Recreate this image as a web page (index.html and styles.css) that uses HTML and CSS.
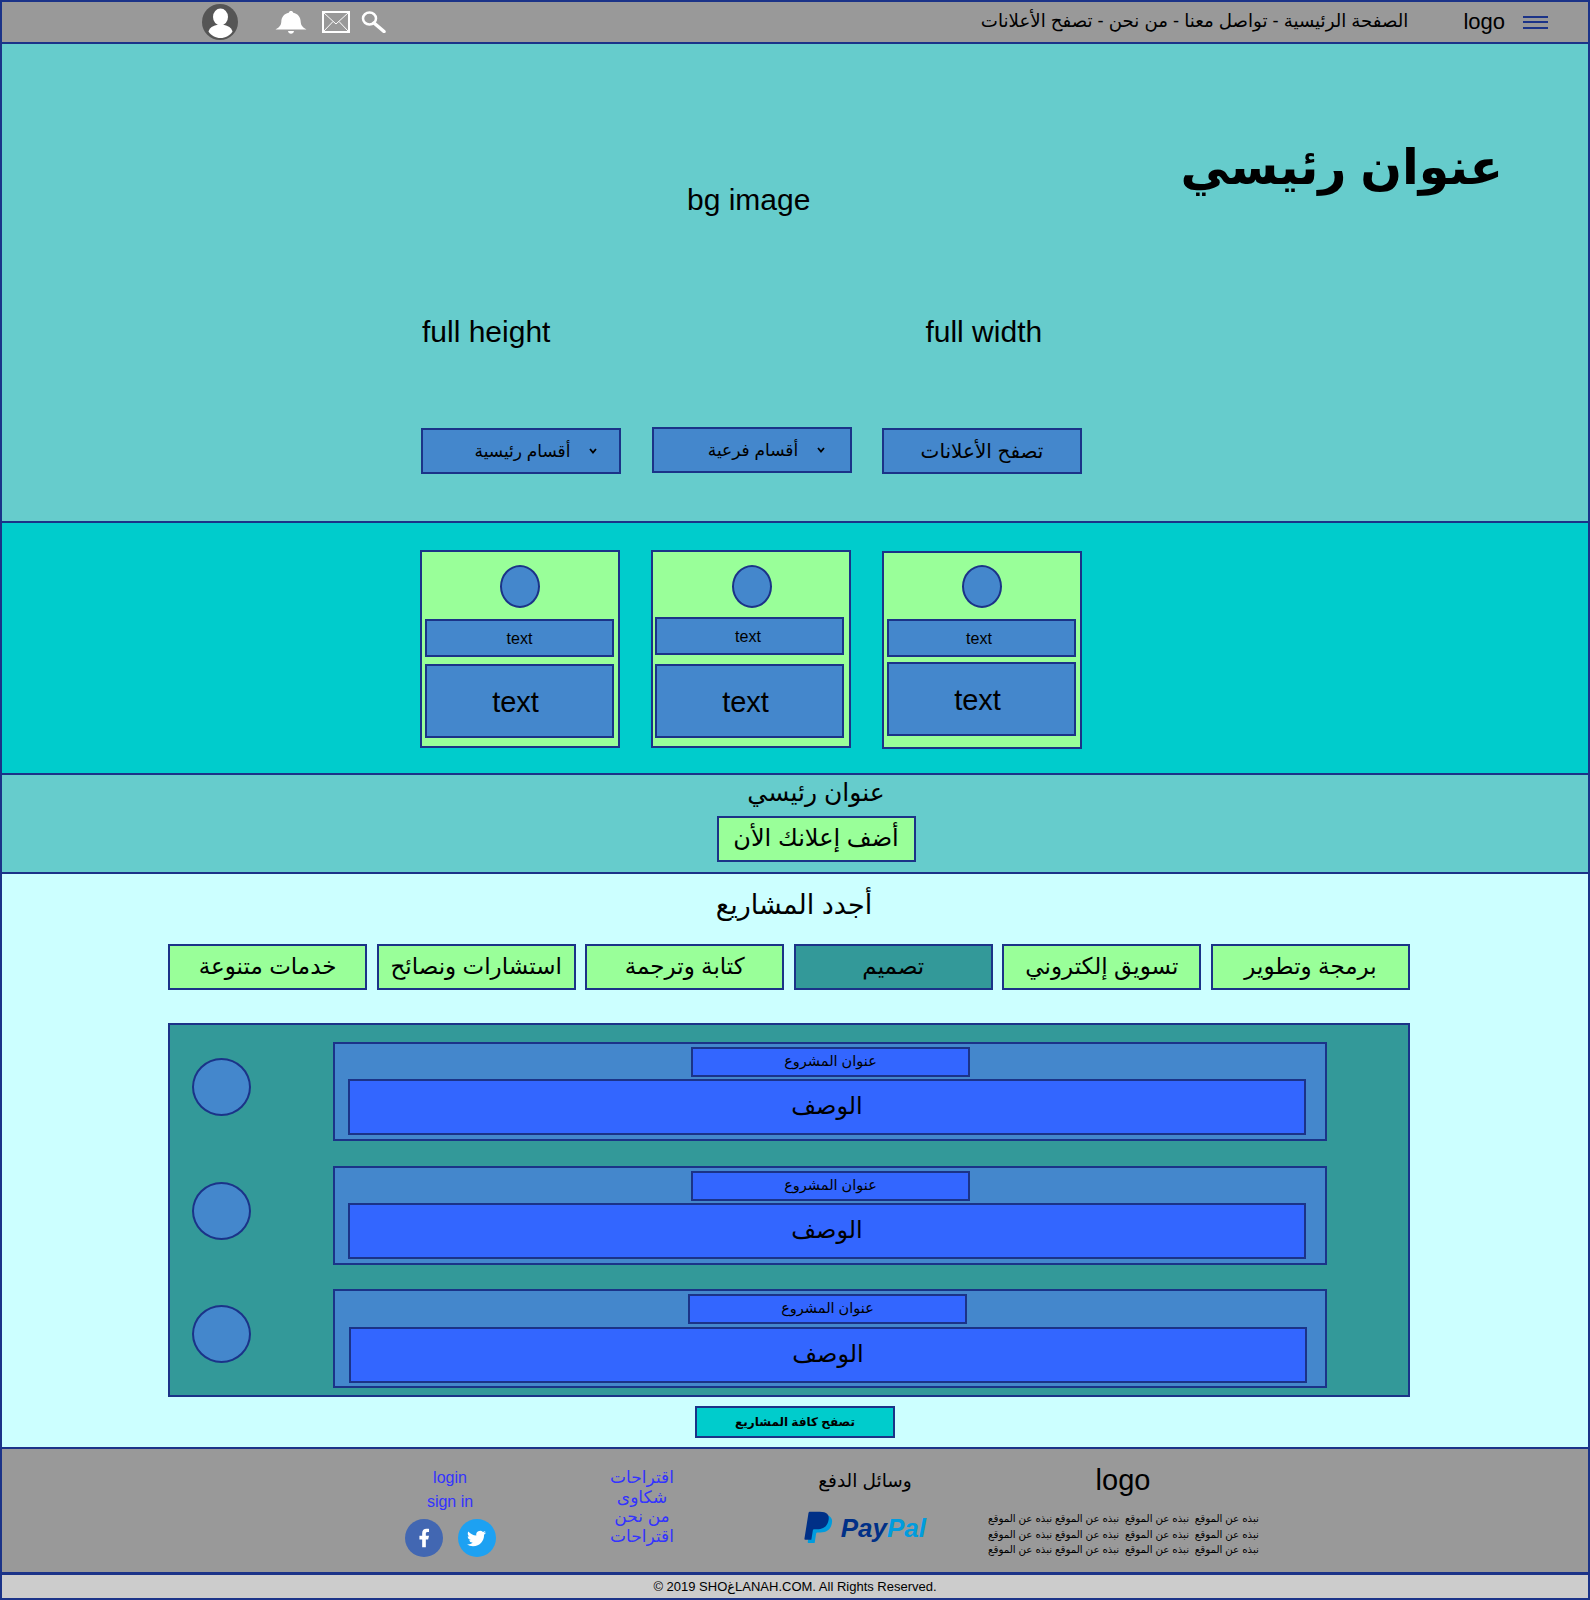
FILE: index.html
```html
<!DOCTYPE html>
<html lang="ar">
<head>
  <meta charset="UTF-8">
  <title>SHOغLANAH</title>
  <meta name="viewport" content="width=device-width, initial-scale=1">
  <link rel="stylesheet" href="styles.css">
</head>
<body>

<!-- Top bar -->
<header class="topbar">
  <div class="topbar-icons">
    <svg class="icon-avatar" viewBox="0 0 36 36"><circle cx="18" cy="18" r="18" fill="#555"/><ellipse cx="18.500" cy="13" rx="7.500" ry="8.500" fill="#fff"/><path d="M6.500 27.500c1.500-5 7-7 12-7s10.500 2 12 7c-2.500 4-7 6.500-12 6.500s-9.500-2.500-12-6.500z" fill="#fff"/></svg>
    <svg class="icon-bell" viewBox="0 0 32 23"><path d="M16 0c1.200 0 2 .7 2.200 1.700 5 1 7.300 4.500 7.500 9 .2 3 1.300 5.300 5.800 7.800H.5c4.500-2.500 5.600-4.800 5.800-7.800.2-4.500 2.500-8 7.500-9C14 .7 14.800 0 16 0z" fill="#fff"/><path d="M13 20h6c-.3 1.700-1.400 2.800-3 2.800s-2.700-1.100-3-2.800z" fill="#fff"/></svg>
    <svg class="icon-mail" viewBox="0 0 28 22" fill="none" stroke="#fff"><rect x="1" y="1" width="26" height="20" stroke-width="2"/><path d="M1.500 1.500L14 13 26.500 1.500M1.500 20.500L11 10.500M26.500 20.500L17 10.500" stroke-width="1"/></svg>
    <svg class="icon-search" viewBox="0 0 25 22" fill="none" stroke="#fff"><ellipse cx="8.500" cy="7.500" rx="6.500" ry="6" stroke-width="2.500"/><path d="M13 12l10 8.500" stroke-width="3.500" stroke-linecap="round"/></svg>
  </div>
  <div class="topbar-right">
    <nav class="topbar-links">الصفحة الرئيسية - تواصل معنا - من نحن - تصفح الأعلانات</nav>
    <div class="topbar-logo">logo</div>
    <div class="burger"><span></span><span></span><span></span></div>
  </div>
</header>

<!-- Hero -->
<section class="hero">
  <div class="hero-top">
    <div class="hero-note">bg image</div>
    <h1 class="hero-title">عنوان رئيسي</h1>
  </div>
  <div class="hero-labels">
    <div class="hero-note">full height</div>
    <div class="hero-note">full width</div>
  </div>
  <div class="hero-buttons">
    <div class="hero-btn hero-btn-menu">أقسام رئيسية <svg class="chev" viewBox="0 0 8 6"><path d="M1 1l3 3.500L7 1" fill="none" stroke="#000" stroke-width="1.800"/></svg></div>
    <div class="hero-btn hero-btn-menu hero-btn-up">أقسام فرعية <svg class="chev" viewBox="0 0 8 6"><path d="M1 1l3 3.500L7 1" fill="none" stroke="#000" stroke-width="1.800"/></svg></div>
    <div class="hero-btn">تصفح الأعلانات</div>
  </div>
</section>

<!-- Feature cards -->
<section class="features">
  <div class="card">
    <div class="dot"></div>
    <div class="card-small">text</div>
    <div class="card-big">text</div>
  </div>
  <div class="card card-b">
    <div class="dot"></div>
    <div class="card-small">text</div>
    <div class="card-big">text</div>
  </div>
  <div class="card card-c">
    <div class="dot"></div>
    <div class="card-small">text</div>
    <div class="card-big">text</div>
  </div>
</section>

<!-- Call to action -->
<section class="cta">
  <h2 class="cta-title">عنوان رئيسي</h2>
  <div class="cta-btn">أضف إعلانك الأن</div>
</section>

<!-- Projects -->
<section class="projects">
  <h2 class="projects-title">أجدد المشاريع</h2>
  <div class="tabs" dir="rtl">
    <div class="tab">برمجة وتطوير</div>
    <div class="tab">تسويق إلكتروني</div>
    <div class="tab tab-active">تصميم</div>
    <div class="tab">كتابة وترجمة</div>
    <div class="tab">استشارات ونصائح</div>
    <div class="tab">خدمات متنوعة</div>
  </div>
  <div class="panel">
    <div class="project">
      <div class="project-dot"></div>
      <div class="project-box">
        <div class="project-name">عنوان المشروع</div>
        <div class="project-desc">الوصف</div>
      </div>
    </div>
    <div class="project">
      <div class="project-dot"></div>
      <div class="project-box">
        <div class="project-name">عنوان المشروع</div>
        <div class="project-desc">الوصف</div>
      </div>
    </div>
    <div class="project project-last">
      <div class="project-dot"></div>
      <div class="project-box">
        <div class="project-name">عنوان المشروع</div>
        <div class="project-desc">الوصف</div>
      </div>
    </div>
  </div>
  <div class="see-all">تصفح كافة المشاريع</div>
</section>

<!-- Footer -->
<footer class="footer">
  <div class="foot-account">
    <a class="foot-login" href="#">login</a>
    <a class="foot-login" href="#">sign in</a>
    <div class="socials">
      <span class="social social-fb"><svg viewBox="0 0 24 24"><path d="M14 13.500h2.500l1-4H14v-2c0-1.030 0-2 2-2h1.500V2.140c-.326-.043-1.557-.14-2.857-.14C11.928 2 10 3.657 10 6.700v2.800H7v4h3V22h4v-8.500z" fill="#fff"/></svg></span>
      <span class="social social-tw"><svg viewBox="0 0 24 24"><path d="M23.953 4.570a10 10 0 01-2.825.775 4.958 4.958 0 002.163-2.723c-.951.555-2.005.959-3.127 1.184a4.920 4.920 0 00-8.384 4.482C7.690 8.095 4.067 6.130 1.640 3.162a4.822 4.822 0 00-.666 2.475c0 1.710.870 3.213 2.188 4.096a4.904 4.904 0 01-2.228-.616v.060a4.923 4.923 0 003.946 4.827 4.996 4.996 0 01-2.212.085 4.936 4.936 0 004.604 3.417 9.867 9.867 0 01-6.102 2.105c-.390 0-.779-.023-1.170-.067a13.995 13.995 0 007.557 2.209c9.053 0 13.998-7.496 13.998-13.985 0-.210 0-.420-.015-.630A9.935 9.935 0 0024 4.590z" fill="#fff"/></svg></span>
    </div>
  </div>
  <div class="foot-links">
    <a href="#">اقتراحات</a>
    <a href="#">شكاوى</a>
    <a href="#">من نحن</a>
    <a href="#">اقتراحات</a>
  </div>
  <div class="foot-pay">
    <div class="foot-pay-title">وسائل الدفع</div>
    <div class="paypal">
      <svg class="paypal-mark" viewBox="0 0 24 24"><path transform="translate(2.500 2.400)" d="M7.076 21.337H2.470a.641.641 0 0 1-.633-.740L4.944.901C5.026.382 5.474 0 5.998 0h7.460c2.570 0 4.578.543 5.690 1.810 1.010 1.150 1.304 2.420 1.012 4.287-.023.143-.047.288-.077.437-.983 5.050-4.349 6.797-8.647 6.797h-2.190c-.524 0-.968.382-1.050.900l-1.120 7.106z" fill="#009cde"/><path d="M7.076 21.337H2.470a.641.641 0 0 1-.633-.740L4.944.901C5.026.382 5.474 0 5.998 0h7.460c2.570 0 4.578.543 5.690 1.810 1.010 1.150 1.304 2.420 1.012 4.287-.023.143-.047.288-.077.437-.983 5.050-4.349 6.797-8.647 6.797h-2.190c-.524 0-.968.382-1.050.900l-1.120 7.106z" fill="#003087"/></svg>
      <span class="paypal-word"><span class="paypal-pay">Pay</span><span class="paypal-pal">Pal</span></span>
    </div>
  </div>
  <div class="foot-about">
    <div class="foot-logo">logo</div>
    <p class="foot-text">نبذه عن الموقع&nbsp; نبذه عن الموقع&nbsp; نبذه عن الموقع نبذه عن الموقع<br>نبذه عن الموقع&nbsp; نبذه عن الموقع&nbsp; نبذه عن الموقع نبذه عن الموقع<br>نبذه عن الموقع&nbsp; نبذه عن الموقع&nbsp; نبذه عن الموقع نبذه عن الموقع</p>
  </div>
</footer>

<div class="copyright">© 2019 SHOغLANAH.COM. All Rights Reserved.</div>

</body>
</html>
```

FILE: styles.css
```css
* { box-sizing: border-box; }

body {
  margin: 0;
  font-family: "Liberation Sans", "DejaVu Sans", sans-serif;
  color: #000;
  background: #ccffff;
}

h1, h2, p { margin: 0; font-weight: normal; }
a { color: #3333ff; text-decoration: none; }

/* top bar */
.topbar {
  height: 44px;
  background: #999;
  border: 2px solid #1b3388;
  display: flex;
  align-items: center;
  justify-content: space-between;
}
.topbar-icons {
  display: flex;
  align-items: center;
  margin-left: 200px;
}
.icon-avatar { width: 36px; height: 36px; }
.icon-bell { width: 32px; height: 23px; margin-left: 37px; }
.icon-mail { width: 28px; height: 22px; margin-left: 15px; }
.icon-search { width: 25px; height: 22px; margin-left: 11px; }
.topbar-right {
  display: flex;
  align-items: center;
  margin-right: 40px;
}
.topbar-links { font-size: 18.200px; padding-bottom: 2px; }
.topbar-logo { font-size: 22px; margin-left: 55px; }
.burger { margin-left: 18px; width: 25px; }
.burger span {
  display: block;
  height: 2px;
  background: #1b3388;
  margin: 3.500px 0;
}

/* hero */
.hero {
  height: 479px;
  background: #66cccc;
  border: 2px solid #1b3388;
  border-top: 0;
}
.hero-top {
  height: 170px;
  padding: 85px 85px 0 685px;
  display: flex;
  justify-content: space-between;
}
.hero-note { font-size: 30px; line-height: 36px; }
.hero-top .hero-note { margin-top: 53px; }
.hero-title { font-size: 49px; font-weight: bold; line-height: 76px; }
.hero-labels {
  margin-top: 100px;
  padding-left: 420px;
  display: flex;
  gap: 375px;
}
.hero-buttons {
  margin-top: 78px;
  padding-left: 419px;
  display: flex;
  align-items: flex-start;
  gap: 30.500px;
}
.hero-btn {
  width: 200px;
  height: 46px;
  background: #4487cc;
  border: 2px solid #1b3388;
  font-size: 20px;
  display: flex;
  align-items: center;
  justify-content: center;
  gap: 19px;
}
.hero-btn-menu { font-size: 17px; padding-left: 30px; }
.hero-btn-up { margin-top: -1px; }
.chev { width: 8px; height: 6px; }

/* feature cards */
.features {
  height: 252px;
  background: #00cccc;
  border: 2px solid #1b3388;
  border-top: 0;
  padding: 27px 0 0 418px;
  display: flex;
  align-items: flex-start;
  gap: 31px;
}
.card {
  width: 200px;
  height: 198px;
  background: #99ff99;
  border: 2px solid #1b3388;
}
.dot {
  width: 40px;
  height: 43px;
  margin: 13px auto 0;
  border-radius: 50%;
  background: #4487cc;
  border: 2px solid #1b3388;
}
.card-small, .card-big {
  width: 189px;
  margin-left: 3px;
  padding-top: 2px;
  background: #4487cc;
  border: 2px solid #1b3388;
  display: flex;
  align-items: center;
  justify-content: center;
}
.card-small { height: 38px; margin-top: 11px; font-size: 16px; }
.card-big { height: 74px; margin-top: 7px; font-size: 29px; padding-right: 8px; }
.card-b .dot { margin-left: 79px; }
.card-b .card-small { margin-top: 9px; margin-left: 2px; padding-right: 3px; }
.card-b .card-big { margin-top: 9px; margin-left: 2px; }
.card-c { margin-top: 1px; }
.card-c .dot { margin-top: 12px; }
.card-c .card-small { margin-left: 3px; padding-right: 5px; }
.card-c .card-big { margin-top: 5px; margin-left: 3px; }

/* call to action */
.cta {
  height: 99px;
  background: #66cccc;
  border: 2px solid #1b3388;
  border-top: 0;
  padding-left: 42px;
  display: flex;
  flex-direction: column;
  align-items: center;
}
.cta-title { font-size: 25px; line-height: 34px; }
.cta-btn {
  width: 199px;
  height: 46px;
  margin-top: 7px;
  background: #99ff99;
  border: 2px solid #1b3388;
  font-size: 24px;
  padding-bottom: 2px;
  display: flex;
  align-items: center;
  justify-content: center;
}

/* projects */
.projects {
  height: 575px;
  background: #ccffff;
  border: 2px solid #1b3388;
  border-top: 0;
  padding: 9px 178px 0 166px;
}
.projects-title {
  font-size: 27px;
  line-height: 44px;
  padding-left: 10px;
  text-align: center;
}
.tabs {
  margin-top: 17px;
  display: flex;
  justify-content: space-between;
}
.tab {
  width: 199px;
  height: 46px;
  background: #99ff99;
  border: 2px solid #1b3388;
  font-size: 23px;
  padding-bottom: 2px;
  display: flex;
  align-items: center;
  justify-content: center;
}
.tab-active { background: #339999; }
.panel {
  height: 374px;
  margin-top: 33px;
  background: #339999;
  border: 2px solid #1b3388;
  padding-top: 17px;
  display: flex;
  flex-direction: column;
  gap: 24.500px;
}
.project { display: flex; align-items: flex-start; }
.project-dot {
  width: 59px;
  height: 58px;
  margin: 16px 0 0 22px;
  border-radius: 50%;
  background: #4487cc;
  border: 2px solid #1b3388;
}
.project-box {
  width: 994px;
  height: 99px;
  margin-left: 82px;
  padding-top: 3px;
  background: #4487cc;
  border: 2px solid #1b3388;
}
.project-name, .project-desc {
  background: #3366ff;
  border: 2px solid #1b3388;
  display: flex;
  align-items: center;
  justify-content: center;
}
.project-name {
  width: 279px;
  height: 30px;
  margin-left: 356px;
  font-size: 14.500px;
  padding-bottom: 2px;
}
.project-desc {
  width: 958px;
  height: 56px;
  margin: 2px 0 0 13px;
  font-size: 24px;
  padding-bottom: 2px;
}
.project-last .project-name { margin-left: 353px; }
.project-last .project-desc { margin: 3px 0 0 14px; }
.see-all {
  width: 200px;
  height: 32px;
  margin: 9px 0 0 527px;
  background: #00cccc;
  border: 2px solid #1b3388;
  font-size: 12px;
  font-weight: bold;
  display: flex;
  align-items: center;
  justify-content: center;
}

/* footer */
.footer {
  height: 126px;
  background: #999;
  border: 2px solid #1b3388;
  border-top: 0;
  border-bottom-width: 3px;
  display: flex;
  align-items: flex-start;
  padding-left: 398px;
}
.foot-account {
  width: 100px;
  padding-top: 17px;
  text-align: center;
}
.foot-login {
  display: block;
  font-size: 16px;
  line-height: 24px;
}
.socials {
  display: flex;
  justify-content: center;
  gap: 15px;
  margin-top: 5px;
}
.social {
  width: 38px;
  height: 38px;
  border-radius: 50%;
  display: flex;
  align-items: center;
  justify-content: center;
}
.social svg { width: 22px; height: 22px; }
.social-fb { background: #4267b2; }
.social-tw { background: #1da1f2; }
.social-tw svg { width: 19px; height: 19px; }
.foot-links {
  width: 100px;
  margin-left: 92px;
  padding-top: 19px;
  text-align: center;
  font-size: 17px;
  line-height: 19.700px;
}
.foot-links a { display: block; }
.foot-pay {
  width: 122px;
  margin-left: 112px;
  padding-top: 17px;
  text-align: center;
}
.foot-pay-title { font-size: 18.500px; line-height: 30px; }
.paypal {
  margin-top: 15px;
  display: flex;
  align-items: flex-end;
  gap: 7px;
}
.paypal-mark { width: 32px; height: 33px; margin-left: -2px; }
.paypal-word { font-size: 26px; font-weight: bold; font-style: italic; }
.paypal-pay { color: #003087; }
.paypal-pal { color: #009cde; }
.foot-about {
  width: 270px;
  margin-left: 62px;
  padding-top: 14px;
  text-align: center;
}
.foot-logo { font-size: 29px; line-height: 34px; }
.foot-text {
  margin-top: 14px;
  font-size: 10.300px;
  line-height: 15.500px;
  white-space: nowrap;
}

.copyright {
  height: 25px;
  background: #ccc;
  border: 2px solid #1b3388;
  border-top: 0;
  font-size: 13px;
  display: flex;
  align-items: center;
  justify-content: center;
}
```
